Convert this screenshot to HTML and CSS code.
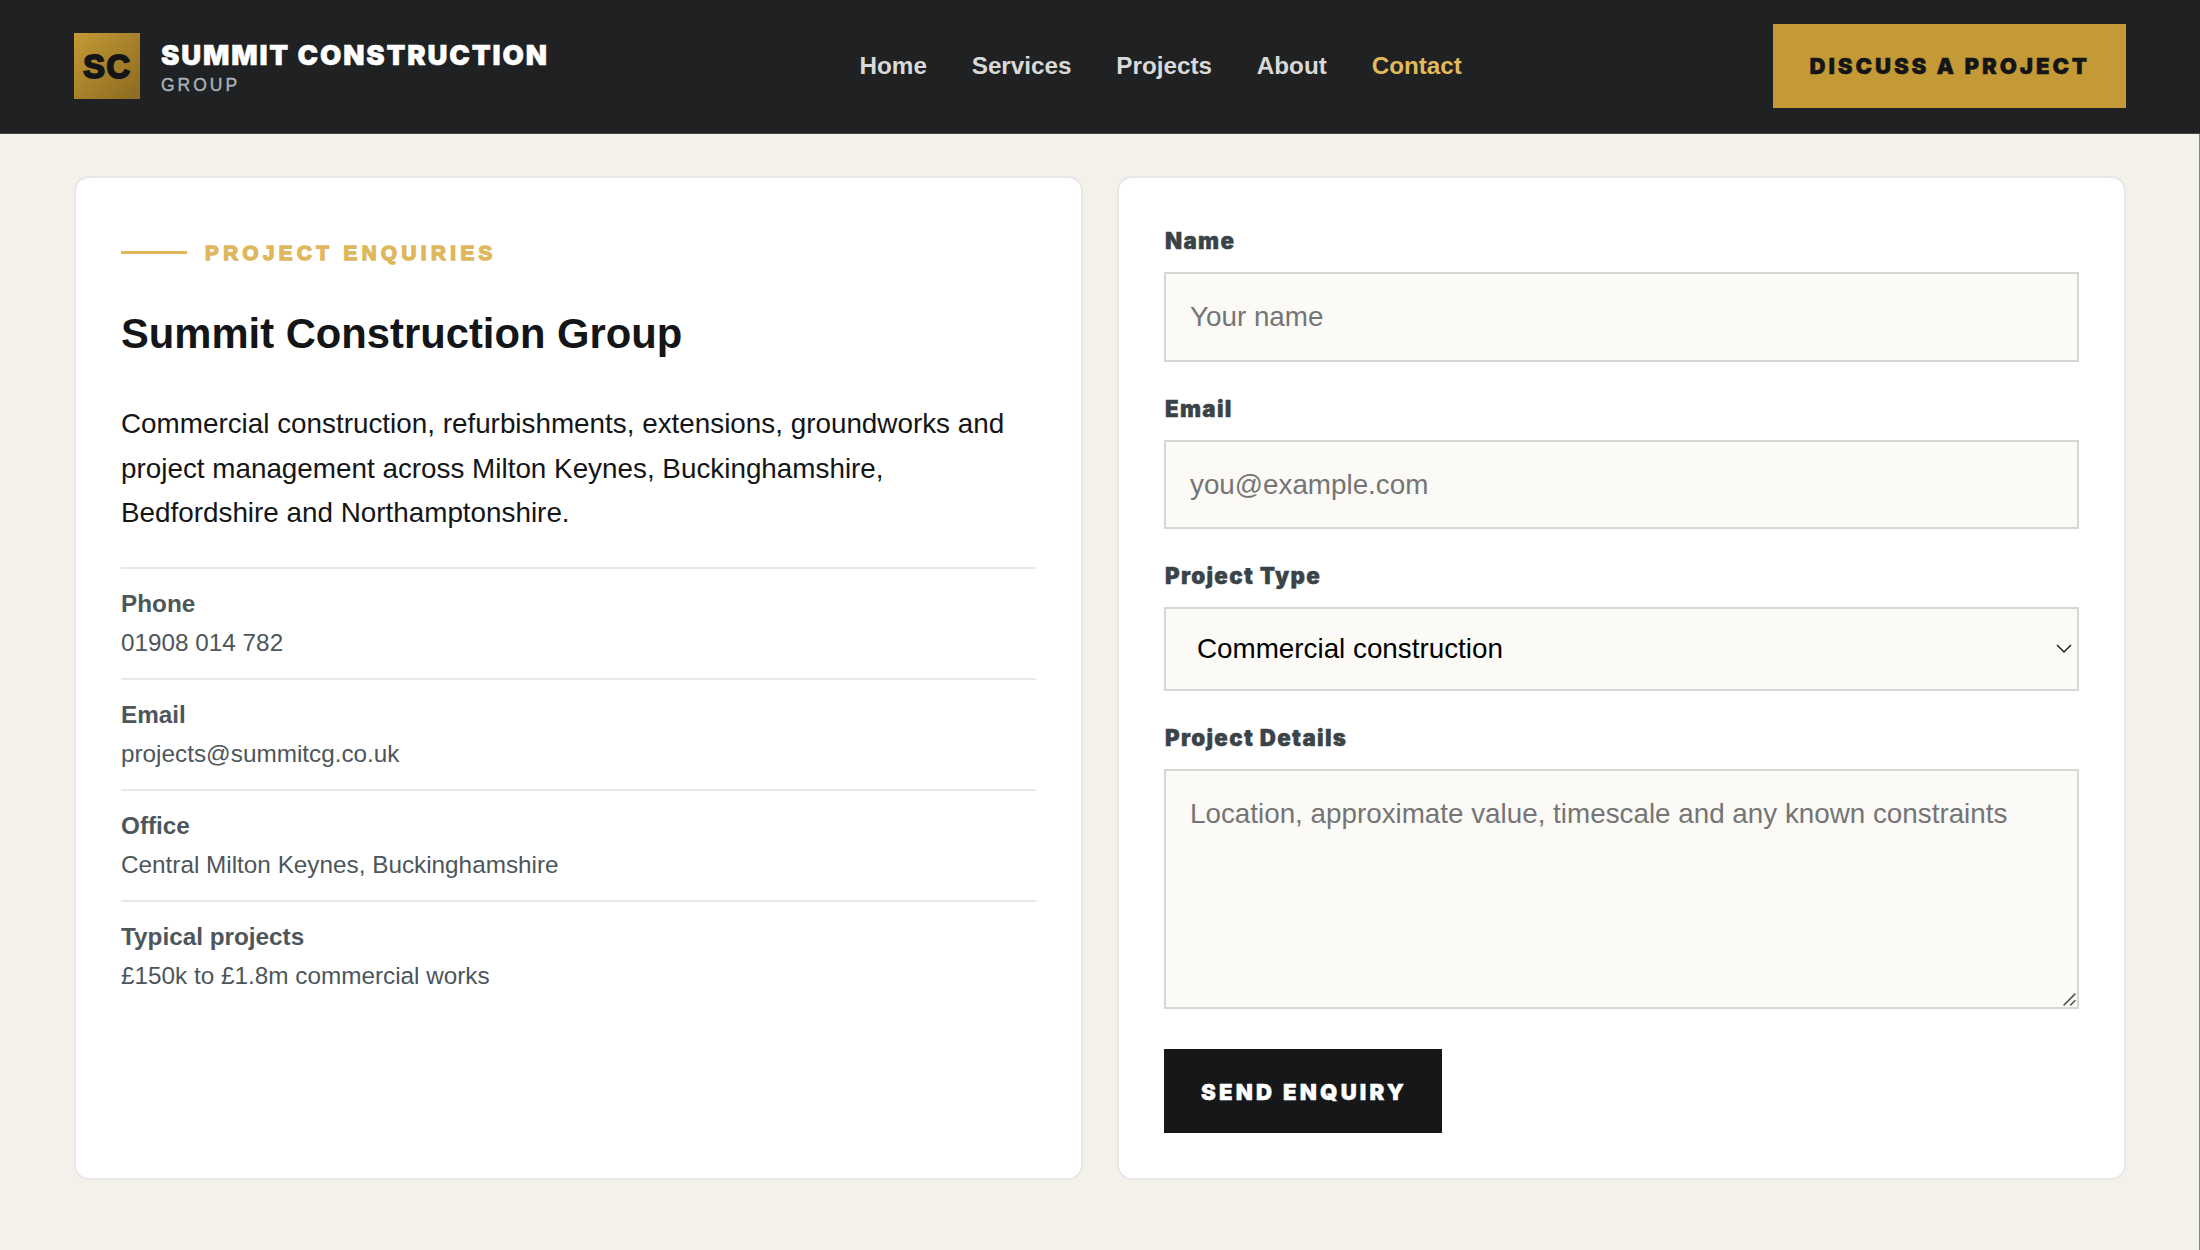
FILE: index.html
```html
<!DOCTYPE html>
<html lang="en">
<head>
<meta charset="utf-8">
<title>Contact | Summit Construction Group</title>
<link rel="stylesheet" href="styles.css">
</head>
<body>
<header class="header">
  <a class="brand">
    <span class="brand-mark">SC</span>
    <span class="brand-text">
      <span class="brand-name">SUMMIT CONSTRUCTION</span>
      <span class="brand-sub">GROUP</span>
    </span>
  </a>
  <nav class="nav">
    <a>Home</a>
    <a>Services</a>
    <a>Projects</a>
    <a>About</a>
    <a class="active">Contact</a>
  </nav>
  <a class="btn btn-gold">DISCUSS A PROJECT</a>
</header>
<main class="main">
  <section class="card">
    <div class="eyebrow"><span class="eyebrow-line"></span>PROJECT ENQUIRIES</div>
    <h2 class="title">Summit Construction Group</h2>
    <p class="lead">Commercial construction, refurbishments, extensions, groundworks and project management across Milton Keynes, Buckinghamshire, Bedfordshire and Northamptonshire.</p>
    <div class="details">
      <div class="detail"><strong>Phone</strong><span>01908 014 782</span></div>
      <div class="detail"><strong>Email</strong><span>projects@summitcg.co.uk</span></div>
      <div class="detail"><strong>Office</strong><span>Central Milton Keynes, Buckinghamshire</span></div>
      <div class="detail"><strong>Typical projects</strong><span>£150k to £1.8m commercial works</span></div>
    </div>
  </section>
  <form class="card form">
    <div class="field">
      <label class="label" for="name">Name</label>
      <input class="control" id="name" type="text" placeholder="Your name">
    </div>
    <div class="field">
      <label class="label" for="email">Email</label>
      <input class="control" id="email" type="email" placeholder="you@example.com">
    </div>
    <div class="field">
      <label class="label" for="type">Project Type</label>
      <div class="control-wrap">
        <select class="control select" id="type"><option>Commercial construction</option></select>
        <svg class="chevron" width="16" height="10" viewBox="0 0 16 10"><path d="M1 1l7 7 7-7" fill="none" stroke="#222" stroke-width="1.5"/></svg>
      </div>
    </div>
    <div class="field">
      <label class="label" for="details">Project Details</label>
      <div class="control-wrap">
        <textarea class="control area" id="details" placeholder="Location, approximate value, timescale and any known constraints"></textarea>
        <svg class="grip" width="13" height="13" viewBox="0 0 13 13"><path d="M.6 12.4L12.4.6M7.2 12.4l5.2-5.2" fill="none" stroke="#555" stroke-width="1.5"/></svg>
      </div>
    </div>
    <button class="btn btn-dark" type="button">SEND ENQUIRY</button>
  </form>
</main>
</body>
</html>
```
FILE: styles.css
```css
* { box-sizing: border-box; }
body {
  margin: 0;
  font-family: "Liberation Sans", Arial, sans-serif;
  font-size: 27.83px;
  line-height: 44.6px;
  color: #141517;
  background: #f4f1ea;
}
.header {
  display: flex;
  align-items: center;
  justify-content: space-between;
  height: 134px;
  padding: 0 74px 1px;
  background: #1f2123;
  border-bottom: 1px solid #454546;
}
.brand { display: flex; align-items: center; gap: 21px; }
.brand-mark {
  display: flex;
  align-items: center;
  justify-content: center;
  width: 66px;
  height: 66px;
  padding: 2px 0 0 1px;
  background: linear-gradient(135deg, #c49a36, #8b6a20);
  color: #141517;
  font-size: 32.5px;
  font-weight: 700;
  letter-spacing: 1.8px;
  -webkit-text-stroke: 2px #141517;
}
.brand-text { display: flex; flex-direction: column; }
.brand-name {
  color: #fff;
  font-family: Inter, "Liberation Sans", sans-serif;
  font-size: 27.6px;
  font-weight: 900;
  line-height: 37px;
  letter-spacing: 1.85px;
  -webkit-text-stroke: .5px #fff;
}
.brand-sub {
  color: #aab3b8;
  font-size: 17.5px;
  line-height: 22px;
  letter-spacing: 3px;
  -webkit-text-stroke: .4px #aab3b8;
}
.nav {
  display: flex;
  gap: 44.8px;
  color: #d9d9d8;
  font-size: 24.25px;
  font-weight: 700;
}
.nav .active { color: #e3b95b; }
.btn {
  display: flex;
  align-items: center;
  height: 84px;
  padding: 0 35px 0 37px;
  border: 0;
  font-family: Inter, "Liberation Sans", sans-serif;
  font-size: 22.2px;
  font-weight: 900;
}
.btn-gold {
  padding-right: 36px;
  background: #c49a36;
  color: #141517;
  letter-spacing: 2.9px;
  -webkit-text-stroke: .4px #141517;
}
.btn-dark {
  align-self: flex-start;
  margin-top: 11px;
  background: #161719;
  color: #fff;
  letter-spacing: 3.2px;
  -webkit-text-stroke: .4px #fff;
}
.main {
  display: grid;
  grid-template-columns: 1fr 1fr;
  gap: 34px;
  align-items: start;
  height: 1116px;
  padding: 42px 73px 0 74px;
  border-right: 1px solid #85857f;
}
.card {
  height: 1004px;
  padding: 45px;
  background: #fff;
  border: 2px solid #e7e7e7;
  border-radius: 15px;
}
.eyebrow {
  display: flex;
  align-items: center;
  gap: 18px;
  height: 33px;
  margin-top: 14px;
  color: #dfb75c;
  font-size: 20.5px;
  font-weight: 700;
  letter-spacing: 4.5px;
  -webkit-text-stroke: 1.5px #dfb75c;
}
.eyebrow-line { width: 66px; height: 3px; margin-bottom: 2px; background: #dfb75c; }
.title { margin: 39px 0 0; font-size: 41.75px; line-height: 50px; }
.lead { margin: 43px 0 31px; }
.detail {
  display: flex;
  flex-direction: column;
  padding: 15px 0 16px;
  border-top: 2px solid #e8e8e8;
  color: #4d565b;
  font-size: 24.3px;
  line-height: 39px;
}
.form { display: flex; flex-direction: column; gap: 29px; }
.field { display: flex; flex-direction: column; gap: 13px; }
.label {
  padding-left: 1px;
  color: #3a4347;
  font-family: Inter, "Liberation Sans", sans-serif;
  font-size: 22.3px;
  font-weight: 900;
  line-height: 36px;
  letter-spacing: 1.3px;
  -webkit-text-stroke: .4px #3a4347;
}
.control {
  display: block;
  width: 100%;
  height: 89.5px;
  padding: 1px 24px 0;
  border: 2px solid #d6d6d3;
  border-radius: 0;
  background: #fbfaf6;
  color: #000;
  font: 27.8px/32px "Liberation Sans", Arial, sans-serif;
}
.control::placeholder { color: #757575; }
.control-wrap { position: relative; }
.select { height: 83.5px; padding-left: 31px; appearance: none; }
.area { height: 240.5px; padding-top: 27px; resize: none; overflow: hidden; }
.chevron { position: absolute; right: 7px; top: 37px; }
.grip { position: absolute; right: 3px; bottom: 3px; }
```
